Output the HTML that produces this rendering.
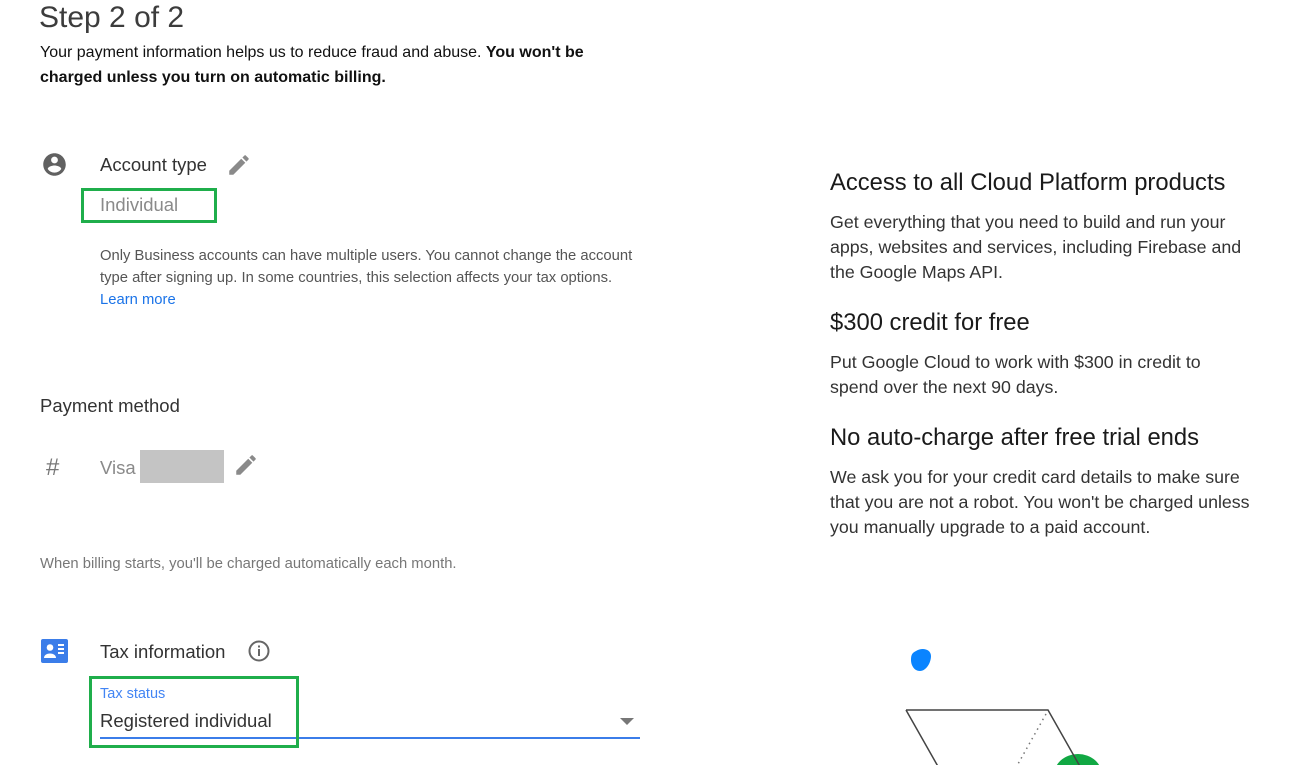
<!DOCTYPE html>
<html><head><style>
body{margin:0;width:1306px;height:765px;overflow:hidden;background:#fff;font-family:"Liberation Sans",Arial,sans-serif;position:relative;color:#212121}
.a{position:absolute;white-space:nowrap}
</style></head><body>
<div class="a" style="left:39px;top:1px;font-size:30px;color:#3c3c3c">Step 2 of 2</div>
<div class="a" style="left:40px;top:40px;font-size:16px;line-height:25px;color:#111">Your payment information helps us to reduce fraud and abuse. <b>You won't be</b><br><b>charged unless you turn on automatic billing.</b></div>

<svg class="a" style="left:41px;top:151px" width="27" height="27" viewBox="0 0 24 24"><path fill="#616161" d="M12 2C6.480 2 2 6.48 2 12s4.48 10 10 10 10-4.48 10-10S17.52 2 12 2zm0 3c1.66 0 3 1.34 3 3s-1.34 3-3 3-3-1.34-3-3 1.34-3 3-3zm0 14.2c-2.5 0-4.71-1.28-6-3.22.03-1.990 4-3.08 6-3.08 1.99 0 5.97 1.09 6 3.08-1.29 1.94-3.5 3.22-6 3.22z"/></svg>
<div class="a" style="left:100px;top:154px;font-size:18.5px;color:#333">Account type</div>
<svg class="a" style="left:226px;top:152px" width="26" height="26" viewBox="0 0 24 24"><path fill="#8a8a8a" d="M3 17.25V21h3.75L17.81 9.94l-3.75-3.75L3 17.25zM20.71 7.04a1 1 0 000-1.41l-2.34-2.34a1 1 0 00-1.41 0l-1.83 1.83 3.75 3.75 1.830-1.83z"/></svg>
<div class="a" style="left:81px;top:188px;width:130px;height:29px;border:3px solid #1fae4b"></div>
<div class="a" style="left:100px;top:194px;font-size:18.5px;color:#8a8a8a">Individual</div>
<div class="a" style="left:100px;top:245px;font-size:14.8px;line-height:22px;color:#555">Only Business accounts can have multiple users. You cannot change the account<br>type after signing up. In some countries, this selection affects your tax options.<br><span style="color:#1a73e8">Learn more</span></div>

<div class="a" style="left:40px;top:395px;font-size:18.5px;color:#333">Payment method</div>
<div class="a" style="left:46px;top:454px;font-size:24px;color:#777">#</div>
<div class="a" style="left:100px;top:457px;font-size:18.5px;color:#8a8a8a">Visa</div>
<div class="a" style="left:140px;top:450px;width:84px;height:33px;background:#c4c4c4"></div>
<svg class="a" style="left:233px;top:452px" width="26" height="26" viewBox="0 0 24 24"><path fill="#8a8a8a" d="M3 17.25V21h3.75L17.81 9.94l-3.75-3.75L3 17.25zM20.71 7.04a1 1 0 000-1.41l-2.34-2.34a1 1 0 00-1.41 0l-1.83 1.83 3.75 3.75 1.83-1.83z"/></svg>
<div class="a" style="left:40px;top:556px;font-size:14.8px;color:#777">When billing starts, you'll be charged automatically each month.</div>

<svg class="a" style="left:41px;top:639px" width="27" height="24" viewBox="0 0 27 24"><rect width="27" height="24" rx="2" fill="#3b7de9"/><circle cx="9" cy="8.5" r="3.3" fill="#fff"/><path d="M3 19c0-3 3-4.5 6-4.5s6 1.5 6 4.5z" fill="#fff"/><rect x="17" y="5" width="6" height="2" fill="#fff"/><rect x="17" y="9" width="6" height="2" fill="#fff"/><rect x="17" y="13" width="6" height="2" fill="#fff"/></svg>
<div class="a" style="left:100px;top:641px;font-size:18.5px;color:#333">Tax information</div>
<svg class="a" style="left:247px;top:639px" width="24" height="24" viewBox="0 0 24 24"><circle cx="12" cy="12" r="9.5" fill="none" stroke="#666" stroke-width="2"/><rect x="11" y="10" width="2" height="7" fill="#666"/><rect x="11" y="6.5" width="2" height="2" fill="#666"/></svg>
<div class="a" style="left:100px;top:686px;font-size:14.5px;color:#4285f4">Tax status</div>
<div class="a" style="left:100px;top:710px;font-size:18.5px;color:#333">Registered individual</div>
<svg class="a" style="left:620px;top:718px" width="14" height="8"><path d="M0 0h14L7 7z" fill="#777"/></svg>
<div class="a" style="left:100px;top:737px;width:540px;height:2px;background:#3b7de9"></div>
<div class="a" style="left:89px;top:676px;width:204px;height:66px;border:3px solid #1fae4b"></div>

<div class="a" style="left:830px;top:169px;font-size:23.8px;color:#1a1a1a">Access to all Cloud Platform products</div>
<div class="a" style="left:830px;top:210px;font-size:17.8px;line-height:25px;color:#333">Get everything that you need to build and run your<br>apps, websites and services, including Firebase and<br>the Google Maps API.</div>
<div class="a" style="left:830px;top:309px;font-size:23.8px;color:#1a1a1a">$300 credit for free</div>
<div class="a" style="left:830px;top:350px;font-size:17.8px;line-height:25px;color:#333">Put Google Cloud to work with $300 in credit to<br>spend over the next 90 days.</div>
<div class="a" style="left:830px;top:424px;font-size:23.8px;color:#1a1a1a">No auto-charge after free trial ends</div>
<div class="a" style="left:830px;top:465px;font-size:17.8px;line-height:25px;color:#333">We ask you for your credit card details to make sure<br>that you are not a robot. You won't be charged unless<br>you manually upgrade to a paid account.</div>

<svg class="a" style="left:860px;top:630px" width="260" height="135">
<path d="M56 21c6-4 15-2 15 5s-5 15-11 15-9-6-9-11 1-7 5-9z" fill="#0a84ff"/>
<ellipse cx="218" cy="145" rx="24" ry="21" fill="#11a843"/>
<path d="M46 80L80 140M46 80H188L222 140" stroke="#444" stroke-width="1.5" fill="none"/>
<path d="M186 84L158 134" stroke="#777" stroke-width="1.5" stroke-dasharray="1.5 4" fill="none"/>
</svg>
</body></html>
